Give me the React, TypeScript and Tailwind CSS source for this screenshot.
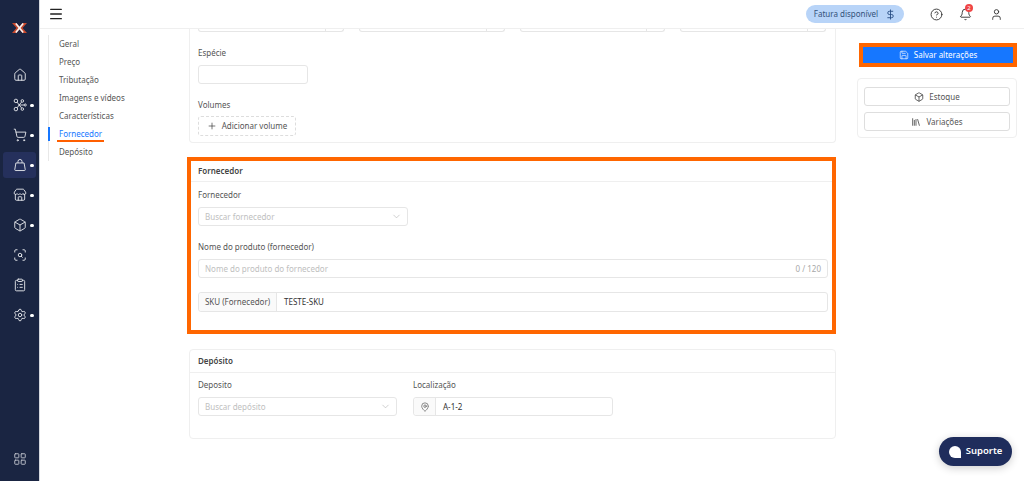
import React from 'react';
import {
  House, ShoppingCart, Store, Box, ScanSearch, ClipboardList, Settings,
  LayoutGrid, CircleHelp, Bell, User, Save, Library, Plus, ChevronDown, MapPin, DollarSign, Menu,
} from 'lucide-react';

type IconProps = { className?: string; strokeWidth?: number };

const NodesIcon: React.FC<IconProps> = ({ className, strokeWidth }) => (
  <svg viewBox="0 0 24 24" fill="none" stroke="currentColor" strokeWidth={strokeWidth} className={className}>
    <circle cx="5" cy="5" r="3" />
    <circle cx="5" cy="19" r="3" />
    <circle cx="16" cy="5" r="2.200" />
    <circle cx="16" cy="19" r="2.200" />
    <circle cx="21" cy="12" r="1.800" />
    <path d="M7.200 7.200L10.500 12l-3.300 4.800M14.700 7L10.500 12l4.200 5M10.500 12h8.700" />
  </svg>
);

const BagIcon: React.FC<IconProps> = ({ className, strokeWidth }) => (
  <svg viewBox="0 0 24 24" fill="none" stroke="currentColor" strokeWidth={strokeWidth} strokeLinejoin="round" className={className}>
    <path d="M5 8.500h14l2 11.500a1.500 1.500 0 0 1-1.500 1.500h-15A1.500 1.500 0 0 1 3 20z" />
    <path d="M8.500 8.500V6a3.500 3.500 0 0 1 7 0v2.500" />
  </svg>
);

const sideItems = [
  { Icon: House, dot: false },
  { Icon: NodesIcon, dot: true },
  { Icon: ShoppingCart, dot: true },
  { Icon: BagIcon, dot: true, active: true },
  { Icon: Store, dot: true },
  { Icon: Box, dot: true },
  { Icon: ScanSearch, dot: false },
  { Icon: ClipboardList, dot: false },
  { Icon: Settings, dot: true },
];

const navItems = ['Geral', 'Preço', 'Tributação', 'Imagens e vídeos', 'Características', 'Fornecedor', 'Depósito'];

const Label: React.FC<{ children: React.ReactNode }> = ({ children }) => (
  <div className="text-[8px] leading-[12px] text-[#555555]">{children}</div>
);

const SelectBox: React.FC<{ placeholder: string; className: string }> = ({ placeholder, className }) => (
  <div className={`h-[19px] border border-[#e6e6e6] rounded-[3px] bg-white flex items-center justify-between pl-[6px] pr-[5px] ${className}`}>
    <span className="text-[8px] text-[#c0c0c0]">{placeholder}</span>
    <ChevronDown className="w-[11px] h-[11px] text-[#b5b5b5]" strokeWidth={1.4} />
  </div>
);

export default function App() {
  return (
    <div className="w-[1024px] h-[481px] flex overflow-hidden bg-white font-['Noto_Sans',sans-serif] relative">
      {/* Sidebar */}
      <aside className="w-[40px] shrink-0 bg-[#1a2542] flex flex-col items-stretch border-r border-[#d5d8de]">
        <div className="h-[60px] flex justify-center pt-[23px]">
          <svg viewBox="0 0 15 10" className="w-[15px] h-[10px]">
            <path d="M0 0h4.500l3 3.500L10.500 0H15l-4.500 5L15 10h-4.500l-3-3.500L4.500 10H0l4.500-5z" fill="#c8482c" />
            <path d="M3.800 0.500l7.400 9M11.200 0.500l-7.400 9" stroke="#f4f4f4" strokeWidth="1.600" />
          </svg>
        </div>
        <div className="flex flex-col">
          {sideItems.map(({ Icon, dot, active }, i) => (
            <div key={i} className="h-[30px] flex items-center">
              <div className={`ml-[3px] w-[33px] h-[26px] rounded-[3px] relative flex items-center justify-center ${active ? 'bg-[#25305c]' : ''}`}>
                <Icon className="w-[14px] h-[14px] text-[#e3e5ea] ml-[1px]" strokeWidth={1.6} />
                {dot && <span className="absolute left-[27px] top-[11.500px] w-[3.500px] h-[3.500px] rounded-full bg-white" />}
              </div>
            </div>
          ))}
        </div>
        <div className="mt-auto h-[29px] flex justify-center">
          <LayoutGrid className="w-[14px] h-[14px] text-[#bfc3cc] ml-[1px]" strokeWidth={1.6} />
        </div>
      </aside>

      <div className="flex-1 flex flex-col min-w-0">
        {/* Header */}
        <header className="h-[29px] shrink-0 border-b border-[#efefef] bg-white flex items-center relative z-10">
          <Menu className="w-[16px] h-[16px] ml-[7.500px] text-[#222222] -mt-[1px]" strokeWidth={2} />
          <div className="ml-auto w-[98px] h-[18px] rounded-full bg-[#b8d4f8] flex items-center justify-center gap-[7px]">
            <span className="text-[8px] text-[#33527a]">Fatura disponível</span>
            <DollarSign className="w-[11px] h-[11px] text-[#2a4f85]" strokeWidth={2} />
          </div>
          <CircleHelp className="w-[13px] h-[13px] ml-[26px] text-[#333333]" strokeWidth={1.7} />
          <div className="relative ml-[16px]">
            <Bell className="w-[13px] h-[13px] text-[#333333]" strokeWidth={1.7} />
            <span className="absolute -top-[4px] left-[6px] w-[8px] h-[8px] rounded-full bg-[#f04545] text-white text-[6px] leading-[8px] text-center">2</span>
          </div>
          <User className="w-[13px] h-[13px] ml-[18px] mr-[21px] text-[#333333]" strokeWidth={1.7} />
        </header>

        {/* Body */}
        <div className="flex-1 flex min-h-0 overflow-hidden">
          {/* Section nav */}
          <nav className="w-[149px] shrink-0 pl-[8px] pt-[6px]">
            <div className="border-l border-[#e8e8e8] pl-[10px] flex flex-col">
              {navItems.map((item) => {
                const on = item === 'Fornecedor';
                return (
                  <div key={item} className={`h-[18px] flex items-center relative text-[8px] ${on ? 'text-[#1677ff]' : 'text-[#555555]'}`}>
                    {on && <span className="absolute -left-[11px] top-[2px] w-[2px] h-[14px] bg-[#1677ff]" />}
                    {item}
                    {on && <span className="absolute -left-[2px] top-[14.500px] w-[47px] h-[2px] bg-[#ff5f00]" />}
                  </div>
                );
              })}
            </div>
          </nav>

          {/* Main column */}
          <main className="w-[647px] shrink-0 flex flex-col">
            <div className="h-[114px] shrink-0 bg-white border border-t-0 border-[#efefef] rounded-b-[4px] px-[8px]">
              <div className="h-[3px] grid grid-cols-4 gap-[15px] pr-[1px]">
                {[0, 1, 2, 3].map((i) => (
                  <div key={i} className="border border-t-0 border-[#e6e6e6] rounded-b-[3px] flex justify-end">
                    <div className="w-[18px] border-l border-[#e6e6e6]" />
                  </div>
                ))}
              </div>
              <div className="mt-[15px]"><Label>Espécie</Label></div>
              <div className="mt-[6px] w-[110px] h-[19px] border border-[#e6e6e6] rounded-[3px]" />
              <div className="mt-[15px]"><Label>Volumes</Label></div>
              <div className="mt-[5px] w-[98px] h-[20px] border border-dashed border-[#dddddd] rounded-[3px] flex items-center justify-center gap-[5px]">
                <Plus className="w-[10px] h-[10px] text-[#333333]" strokeWidth={1.6} />
                <span className="text-[8px] text-[#555555]">Adicionar volume</span>
              </div>
            </div>

            {/* Fornecedor, with the orange frame */}
            <div className="mt-[18px] ml-[2px] mr-[4px] h-[169px] shrink-0 bg-white outline-4 outline-[#ff6600]">
              <div className="h-[21px] px-[7px] flex items-center border-b border-[#efefef] text-[8px] font-semibold text-[#444444]">Fornecedor</div>
              <div className="px-[7px] pt-[7px]">
                <Label>Fornecedor</Label>
                <SelectBox placeholder="Buscar fornecedor" className="mt-[6px] w-[210px]" />
                <div className="mt-[15px]"><Label>Nome do produto (fornecedor)</Label></div>
                <div className="mt-[6px] h-[19px] border border-[#e6e6e6] rounded-[3px] flex items-center justify-between px-[6px] w-[630px]">
                  <span className="text-[8px] text-[#c0c0c0]">Nome do produto do fornecedor</span>
                  <span className="text-[8px] text-[#a8a8a8]">0 / 120</span>
                </div>
                <div className="mt-[14px] h-[20px] border border-[#e6e6e6] rounded-[3px] flex items-stretch w-[630px]">
                  <div className="w-[78px] bg-[#fafafa] border-r border-[#e6e6e6] flex items-center justify-center text-[8px] text-[#555555] rounded-l-[3px]">SKU (Fornecedor)</div>
                  <div className="pl-[7px] flex items-center text-[8px] text-[#333333]">TESTE-SKU</div>
                </div>
              </div>
            </div>

            <div className="mt-[19px] h-[90px] shrink-0 bg-white border border-[#efefef] rounded-[4px]">
              <div className="h-[23px] px-[8px] flex items-center border-b border-[#efefef] text-[8px] font-semibold text-[#444444]">Depósito</div>
              <div className="px-[8px] pt-[6px] flex">
                <div className="w-[215px]">
                  <Label>Deposito</Label>
                  <SelectBox placeholder="Buscar depósito" className="mt-[6px] w-[199px]" />
                </div>
                <div>
                  <Label>Localização</Label>
                  <div className="mt-[6px] w-[200px] h-[19px] border border-[#e6e6e6] rounded-[3px] flex items-stretch">
                    <div className="w-[22px] bg-[#fafafa] border-r border-[#e6e6e6] flex items-center justify-center rounded-l-[3px]">
                      <MapPin className="w-[10px] h-[10px] text-[#555555]" strokeWidth={1.6} />
                    </div>
                    <div className="pl-[7px] flex items-center text-[8px] text-[#333333]">A-1-2</div>
                  </div>
                </div>
              </div>
            </div>
          </main>

          {/* Right column */}
          <div className="ml-[21px] w-[160px] shrink-0 pt-[18px]">
            <div className="ml-[6px] w-[150px] h-[16px] bg-[#1677ff] outline-4 outline-[#ff6600] flex items-center justify-center gap-[5px] text-[8px] text-white">
              <Save className="w-[10px] h-[10px]" strokeWidth={1.6} />
              Salvar alterações
            </div>
            <div className="mt-[15px] w-[160px] h-[60px] border border-[#efefef] rounded-[4px] px-[6px] pt-[8px] flex flex-col gap-[6px]">
              <div className="h-[19px] w-[146px] border border-[#dedede] rounded-[3px] flex items-center justify-center gap-[5px] text-[8px] text-[#555555]">
                <Box className="w-[10px] h-[10px] text-[#333333]" strokeWidth={1.8} />
                Estoque
              </div>
              <div className="h-[19px] w-[146px] border border-[#dedede] rounded-[3px] flex items-center justify-center gap-[5px] text-[8px] text-[#555555]">
                <Library className="w-[10px] h-[10px] text-[#333333]" strokeWidth={1.8} />
                Variações
              </div>
            </div>
          </div>
        </div>
      </div>

      {/* Support bubble */}
      <div className="absolute left-[939px] top-[437px] w-[73px] h-[29px] rounded-full bg-[#1f2d5c] shadow-[0_2px_8px_rgba(0,0,0,0.2)] flex items-center justify-center gap-[5px]">
        <span className="w-[12px] h-[12px] rounded-t-full rounded-bl-full bg-white" />
        <span className="text-[9.500px] font-semibold text-white">Suporte</span>
      </div>
    </div>
  );
}
